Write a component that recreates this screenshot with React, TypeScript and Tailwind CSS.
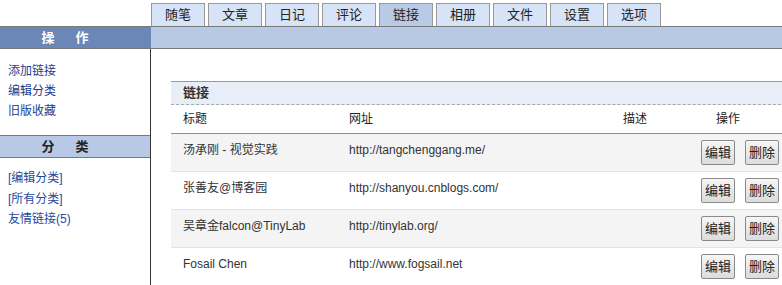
const tabs = ["随笔", "文章", "日记", "评论", "链接", "相册", "文件", "设置", "选项"];

const links = [
  { title: "汤承刚 - 视觉实践", url: "http://tangchenggang.me/" },
  { title: "张善友@博客园", url: "http://shanyou.cnblogs.com/" },
  { title: "吴章金falcon@TinyLab", url: "http://tinylab.org/" },
  { title: "Fosail Chen", url: "http://www.fogsail.net" },
];

function SideHeader({ a, b, dark }: { a: string; b: string; dark?: boolean }) {
  return (
    <div
      className={
        dark
          ? "flex h-full w-[130px] items-center justify-center gap-[21px] text-[13px] font-bold text-white"
          : "flex h-[21px] w-[130px] items-center justify-center gap-[21px] text-[13px] font-bold text-[#222]"
      }
    >
      <span>{a}</span>
      <span>{b}</span>
    </div>
  );
}

function Btn({ label }: { label: string }) {
  return (
    <button className="h-[25px] rounded-[2px] border border-[#8a8a8a] bg-gradient-to-b from-[#f6f6f6] to-[#dcdcdc] px-[3px] text-[13px] leading-none text-[#222]">
      {label}
    </button>
  );
}

export default function App() {
  return (
    <div
      className="h-[285px] w-[782px] overflow-hidden bg-white text-[12px] text-[#333]"
      style={{ fontFamily: '"Liberation Sans", "Noto Sans CJK SC", sans-serif' }}
    >
      {/* tabs */}
      <div className="flex h-[26px] items-end pl-[151px]">
        <div className="flex gap-[3px]">
          {tabs.map((t) => (
            <div
              key={t}
              className={
                "flex h-[23px] w-[54px] items-center justify-center border border-b-0 border-[#9a9a9a] text-[13px] text-[#222] " +
                (t === "链接" ? "bg-[#b9cae6]" : "bg-[#d7e3f6]")
              }
            >
              {t}
            </div>
          ))}
        </div>
      </div>

      {/* bar */}
      <div className="flex h-[23px] border-y border-[#7a7a7a]">
        <div className="w-[151px] bg-[#6a87b7]">
          <SideHeader a="操" b="作" dark />
        </div>
        <div className="flex-1 bg-[#b8c9e6]" />
      </div>

      <div className="flex">
        {/* sidebar */}
        <div className="h-[240px] w-[151px] shrink-0 border-r border-[#333]">
          <div className="flex flex-col pt-[12px] pl-[8px] leading-[20px] text-[#1e3d8f]">
            <a>添加链接</a>
            <a>编辑分类</a>
            <a>旧版收藏</a>
          </div>
          <div className="mt-[14px] border-y border-[#7a7a7a] bg-[#b8c9e6]">
            <SideHeader a="分" b="类" />
          </div>
          <div className="flex flex-col pt-[10px] pl-[8px] leading-[20.5px] text-[#1e4aa0]">
            <a>[编辑分类]</a>
            <a>[所有分类]</a>
            <a>友情链接(5)</a>
          </div>
        </div>

        {/* main */}
        <div className="pt-[32px] pl-[20px]">
          <div className="w-[620px]">
            <div className="border-t border-[#8d9cb4] bg-[#e7eef8]">
              <div className="flex h-[23px] items-center border-b border-dashed border-[#a8a8a8] pl-[12px] text-[13px] font-bold text-[#333]">
                链接
              </div>
            </div>
            <div className="grid h-[29px] grid-cols-[166px_274px_90px_1fr] items-center border-b border-[#7d8fae] text-[#222]">
              <div className="pl-[12px]">标题</div>
              <div className="pl-[12px]">网址</div>
              <div className="pl-[12px]">描述</div>
              <div className="pl-[15px]">操作</div>
            </div>
            {links.map((l, i) => (
              <div
                key={l.url}
                className={
                  "grid h-[38px] grid-cols-[166px_274px_90px_1fr] border-b border-[#e3e3e3] " +
                  (i % 2 === 0 ? "bg-[#f4f4f4]" : "bg-white")
                }
              >
                <div className="pt-[6px] pl-[12px] leading-[20px]">{l.title}</div>
                <div className="pt-[6px] pl-[12px] leading-[20px]">{l.url}</div>
                <div />
                <div className="flex gap-[10px] pt-[6px]">
                  <Btn label="编辑" />
                  <Btn label="删除" />
                </div>
              </div>
            ))}
          </div>
        </div>
      </div>
    </div>
  );
}
